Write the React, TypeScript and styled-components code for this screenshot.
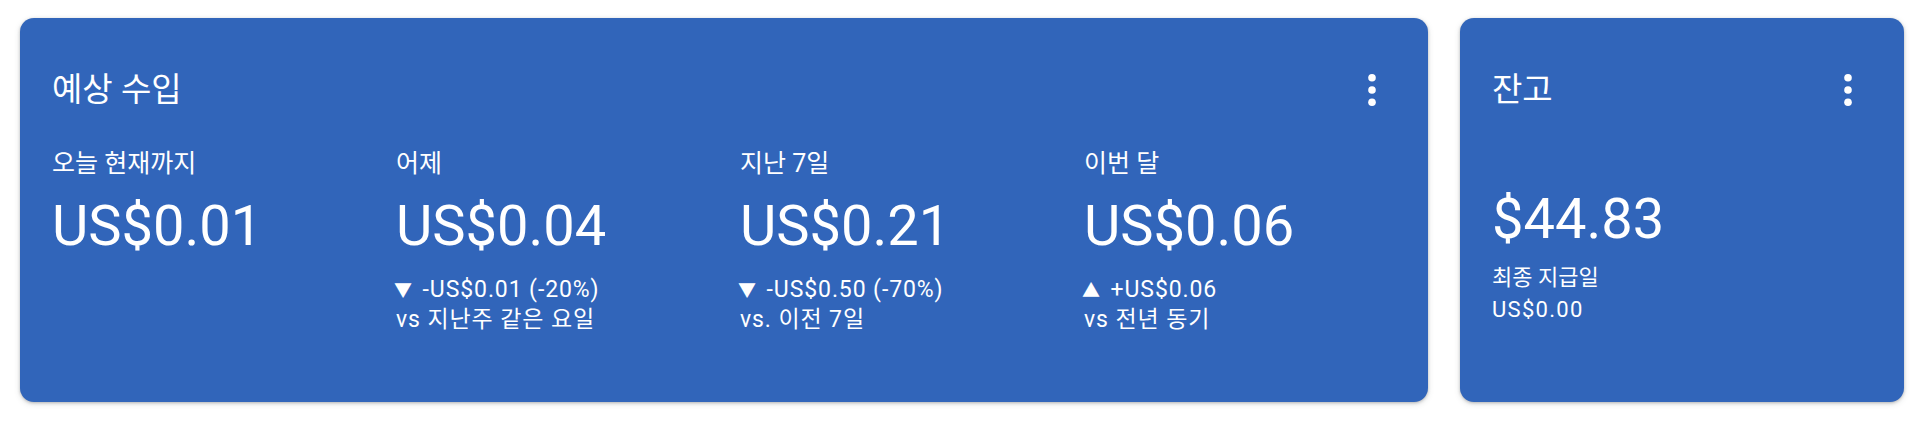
import React from "react";
import styled, { createGlobalStyle } from "styled-components";

const Global = createGlobalStyle`
  html, body { margin: 0; padding: 0; background: #ffffff; }
  body { font-family: Roboto, "Noto Sans CJK KR", sans-serif; color: #fff; }
`;

const Page = styled.div`
  display: flex;
  gap: 32px;
  padding: 18px 20px;
`;

const Card = styled.section<{ $w: number }>`
  width: ${(p) => p.$w}px;
  height: 384px;
  box-sizing: border-box;
  background: #3165ba;
  border-radius: 14px;
  box-shadow: 0 1px 3px rgba(60, 64, 67, 0.3), 0 2px 6px rgba(60, 64, 67, 0.15);
  padding: 48px 0 0 32px;
  display: flex;
  flex-direction: column;
`;

const Header = styled.div`
  display: flex;
  align-items: center;
  justify-content: space-between;
  height: 48px;
  padding-right: 36px;
`;

const Title = styled.h2`
  margin: 0;
  font-family: Roboto, "Noto Sans CJK KR", sans-serif;
  font-weight: 400;
  font-size: 33px;
  line-height: 40px;
`;

const MenuButton = styled.button`
  width: 40px;
  height: 40px;
  border: 0;
  padding: 0;
  background: transparent;
  display: flex;
  align-items: center;
  justify-content: center;
  color: #fff;
`;

const Metrics = styled.div`
  display: grid;
  grid-template-columns: repeat(4, 344px);
  margin-top: 34px;
`;

const Metric = styled.div`
  display: flex;
  flex-direction: column;
`;

const Label = styled.div`
  font-size: 25px;
  line-height: 32px;
`;

const BigValue = styled.div<{ $mt: number }>`
  font-size: 56px;
  line-height: 64px;
  margin-top: ${(p) => p.$mt}px;
`;

const Delta = styled.div`
  margin-top: 16px;
  font-size: 23px;
  line-height: 30px;
  letter-spacing: 0.9px;
`;

const Arrow = styled.span`
  display: inline-block;
  width: 21px;
  margin-left: -2px;
  margin-right: 1px;
  font-family: "Noto Sans CJK KR", sans-serif;
  font-size: 18px;
  letter-spacing: 0;
`;

const Balance = styled.div`
  display: flex;
  flex-direction: column;
  margin-top: 73px;
`;

const SmallLine = styled.div<{ $mt?: number; $ls?: number }>`
  font-size: 22px;
  line-height: 32px;
  margin-top: ${(p) => p.$mt ?? 0}px;
  letter-spacing: ${(p) => p.$ls ?? 0}px;
`;

const Kebab = () => (
  <svg width="12" height="34" viewBox="0 0 12 34" fill="currentColor" aria-hidden>
    <circle cx="6" cy="4.7" r="3.8" />
    <circle cx="6" cy="17" r="3.8" />
    <circle cx="6" cy="29.3" r="3.8" />
  </svg>
);

const metrics = [
  { label: "오늘 현재까지", value: "US$0.01" },
  { label: "어제", value: "US$0.04", arrow: "▼", delta: " -US$0.01 (-20%)", cmp: "vs 지난주 같은 요일" },
  { label: "지난 7일", value: "US$0.21", arrow: "▼", delta: " -US$0.50 (-70%)", cmp: "vs. 이전 7일" },
  { label: "이번 달", value: "US$0.06", arrow: "▲", delta: " +US$0.06", cmp: "vs 전년 동기" },
];

export default function App() {
  return (
    <>
      <Global />
      <Page>
        <Card $w={1408}>
          <Header>
            <Title>예상 수입</Title>
            <MenuButton aria-label="더보기">
              <Kebab />
            </MenuButton>
          </Header>
          <Metrics>
            {metrics.map((m) => (
              <Metric key={m.label}>
                <Label>{m.label}</Label>
                <BigValue $mt={14}>{m.value}</BigValue>
                {m.delta && (
                  <Delta>
                    <Arrow>{m.arrow}</Arrow>
                    {m.delta}
                    <br />
                    {m.cmp}
                  </Delta>
                )}
              </Metric>
            ))}
          </Metrics>
        </Card>
        <Card $w={444}>
          <Header>
            <Title>잔고</Title>
            <MenuButton aria-label="더보기">
              <Kebab />
            </MenuButton>
          </Header>
          <Balance>
            <BigValue $mt={0}>$44.83</BigValue>
            <SmallLine $mt={11}>최종 지급일</SmallLine>
            <SmallLine $ls={1.3}>US$0.00</SmallLine>
          </Balance>
        </Card>
      </Page>
    </>
  );
}
